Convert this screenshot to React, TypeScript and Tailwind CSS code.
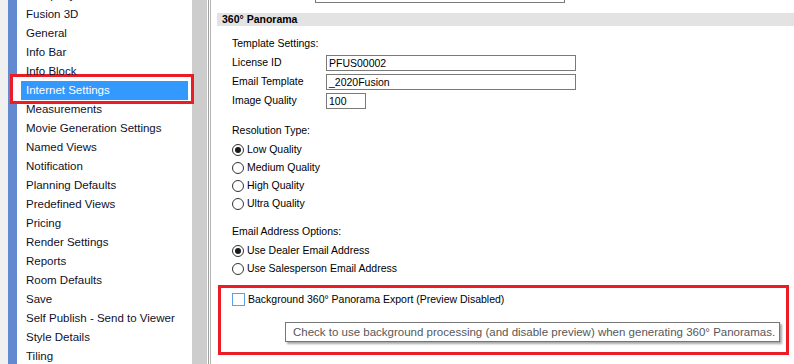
const items = [
  "Company Info",
  "Fusion 3D",
  "General",
  "Info Bar",
  "Info Block",
  "Internet Settings",
  "Measurements",
  "Movie Generation Settings",
  "Named Views",
  "Notification",
  "Planning Defaults",
  "Predefined Views",
  "Pricing",
  "Render Settings",
  "Reports",
  "Room Defaults",
  "Save",
  "Self Publish - Send to Viewer",
  "Style Details",
  "Tiling",
];

const Radio = ({ checked, label }: { checked?: boolean; label: string }) => (
  <div className="flex h-[18px] items-center">
    <span className="flex h-[12px] w-[12px] items-center justify-center rounded-full border border-[#333] bg-white">
      {checked && <span className="h-[6px] w-[6px] rounded-full bg-[#1a1a1a]" />}
    </span>
    <span className="ml-[3px]">{label}</span>
  </div>
);

const Field = ({ label, value, w }: { label: string; value: string; w: string }) => (
  <div className="flex h-[19px] items-center">
    <span className="w-[94px]">{label}</span>
    <div className={`h-[16px] ${w} border border-[#7a7a7a] pl-[2px] leading-[14px]`}>{value}</div>
  </div>
);

export default function App() {
  return (
    <div className="flex h-[364px] w-[794px] overflow-hidden bg-white font-['Liberation_Sans',Arial,sans-serif] text-black">
      <div className="w-[8px] shrink-0 bg-[#f0f0f0]" />
      <div className="w-[9px] shrink-0 bg-[#6389d1]" />
      {/* settings list */}
      <ul className="relative -mt-[14px] w-[175px] shrink-0 text-[11.5px] text-[#10102a]">
        <div className="absolute left-[-7px] top-[88px] h-[30px] w-[184px] border-[3px] border-[#ec1c24] bg-white" />
        {items.map(item => (
          <li
            key={item}
            className={
              item === "Internet Settings"
                ? "relative mx-[4px] h-[19px] bg-[#3399ff] pl-[5px] leading-[19px] whitespace-nowrap text-white"
                : "relative mx-[4px] h-[19px] pl-[5px] leading-[19px] whitespace-nowrap"
            }
          >
            {item}
          </li>
        ))}
      </ul>
      <div className="w-[15px] shrink-0 bg-[#cdcdcd]" />
      <div className="w-px shrink-0 bg-white" />
      <div className="w-px shrink-0 bg-[#a0a0a0]" />
      <div className="w-px shrink-0 bg-white" />
      <div className="w-px shrink-0 bg-[#b4b4b4]" />

      {/* options panel */}
      <div className="flex min-w-0 flex-1 flex-col text-[10.5px]">
        <div className="ml-[104px] h-[3px] w-[250px] border-x border-b border-[#7a7a7a]" />
        <div className="ml-[6px] mt-[10px] h-[13px] bg-[#e3e3e3] pl-[5px] text-[10.5px] font-bold leading-[13px]">
          360° Panorama
        </div>
        <div className="pl-[21px]">
          <div className="mt-[8px] h-[19px] leading-[19px]">Template Settings:</div>
          <Field label="License ID" value="PFUS00002" w="w-[250px]" />
          <Field label="Email Template" value="_2020Fusion" w="w-[250px]" />
          <Field label="Image Quality" value="100" w="w-[40px]" />

          <div className="mt-[11px] h-[19px] leading-[19px]">Resolution Type:</div>
          <div className="mt-[1px]">
            <Radio checked label="Low Quality" />
            <Radio label="Medium Quality" />
            <Radio label="High Quality" />
            <Radio label="Ultra Quality" />
          </div>

          <div className="mt-[9px] h-[19px] leading-[19px]">Email Address Options:</div>
          <div className="mt-[1px]">
            <Radio checked label="Use Dealer Email Address" />
            <Radio label="Use Salesperson Email Address" />
          </div>
        </div>

        <div className="ml-[7px] mt-[7px] h-[70px] w-[571px] border-[3px] border-[#ec1c24]">
          <div className="mt-[2px] flex h-[19px] items-center pl-[11px]">
            <span className="h-[13px] w-[13px] border border-[#5aa0e8] bg-white" />
            <span className="ml-[3px]">Background 360° Panorama Export (Preview Disabled)</span>
          </div>
          <div className="ml-[64px] mt-[13px] h-[20px] w-[495px] border border-[#767676] bg-white pl-[7px] text-[11.5px] leading-[18px] whitespace-nowrap text-[#575757] shadow-[2px_2px_2px_rgba(0,0,0,0.35)]">
            Check to use background processing (and disable preview) when generating 360° Panoramas.
          </div>
        </div>
      </div>
    </div>
  );
}
